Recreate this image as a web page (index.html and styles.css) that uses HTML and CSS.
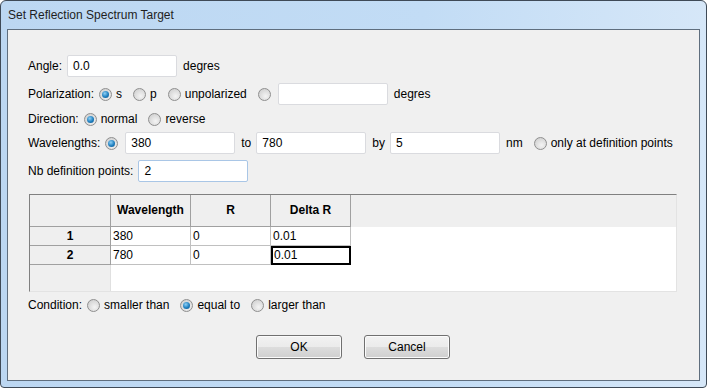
FILE: index.html
```html
<!DOCTYPE html>
<html lang="en">

<head>
    <meta charset="UTF-8">
    <title>Set Reflection Spectrum Target</title>
    <link rel="stylesheet" href="styles.css">
</head>

<body>
    <div class="window">
        <div class="titlebar">Set Reflection Spectrum Target</div>

        <div class="client">
            <!-- Angle -->
            <div class="row row-angle">
                <span class="label">Angle:</span>
                <span class="field">0.0</span>
                <span class="unit">degres</span>
            </div>

            <!-- Polarization -->
            <div class="row row-pol">
                <span class="label">Polarization:</span>
                <span class="option"><span class="radio checked"></span>s</span>
                <span class="option"><span class="radio"></span>p</span>
                <span class="option"><span class="radio"></span>unpolarized</span>
                <span class="option bare"><span class="radio"></span></span>
                <span class="field"></span>
                <span class="unit">degres</span>
            </div>

            <!-- Direction -->
            <div class="row row-dir">
                <span class="label">Direction:</span>
                <span class="option"><span class="radio checked"></span>normal</span>
                <span class="option"><span class="radio"></span>reverse</span>
            </div>

            <!-- Wavelengths -->
            <div class="row row-wl">
                <span class="label">Wavelengths:</span>
                <span class="option bare"><span class="radio checked"></span></span>
                <span class="field">380</span>
                <span class="unit">to</span>
                <span class="field">780</span>
                <span class="unit">by</span>
                <span class="field">5</span>
                <span class="unit wide">nm</span>
                <span class="option"><span class="radio"></span>only at definition points</span>
            </div>

            <!-- Nb definition points -->
            <div class="row row-nb">
                <span class="label">Nb definition points:</span>
                <span class="field focus">2</span>
            </div>

            <!-- Table -->
            <div class="table">
                <div class="thead">
                    <div class="corner"></div>
                    <div class="th">Wavelength</div>
                    <div class="th">R</div>
                    <div class="th">Delta R</div>
                </div>
                <div class="tr">
                    <div class="rh">1</div>
                    <div class="td">380</div>
                    <div class="td">0</div>
                    <div class="td">0.01</div>
                </div>
                <div class="tr">
                    <div class="rh">2</div>
                    <div class="td">780</div>
                    <div class="td">0</div>
                    <div class="td selected">0.01</div>
                </div>
                <div class="tfill">
                    <div class="rh-fill"></div>
                </div>
            </div>

            <!-- Condition -->
            <div class="row row-cond">
                <span class="label">Condition:</span>
                <span class="option"><span class="radio"></span>smaller than</span>
                <span class="option"><span class="radio checked"></span>equal to</span>
                <span class="option"><span class="radio"></span>larger than</span>
            </div>

            <div class="buttons">
                <button>OK</button>
                <button>Cancel</button>
            </div>
        </div>
    </div>
</body>

</html>
```

FILE: styles.css
```css
/* General Styles */
body {
    margin: 0;
    padding: 0;
    background: #ffffff;
    font-family: 'Liberation Sans', Arial, sans-serif;
    font-size: 12px;
    color: #000;
}

.window {
    width: 707px;
    height: 388px;
    box-sizing: border-box;
    border: 1px solid #3f4a57;
    border-radius: 6px 6px 4px 4px;
    background: linear-gradient(90deg, #bcd7f2, #c2dcf5 60%, #d6e7f8);
    display: flex;
    flex-direction: column;
}

.titlebar {
    height: 28px;
    line-height: 29px;
    padding-left: 7px;
    color: #1e1e1e;
}

.client {
    margin-left: 6px;
    width: 693px;
    height: 352px;
    box-sizing: border-box;
    border: 1px solid #5f6e7e;
    background: #f0f0f0;
    padding: 25px 0 0 20px;
    display: flex;
    flex-direction: column;
}

/* Rows */
.row {
    display: flex;
    align-items: center;
    height: 22px;
}

.row-pol { margin-top: 6px; }
.row-dir { margin-top: 5px; height: 18px; }
.row-wl { margin-top: 4px; }
.row-nb { margin-top: 6px; }
.row-cond { margin-top: 4px; height: 18px; }

.label {
    margin-right: 5px;
}

.unit {
    margin: 0 5px 0 6px;
}

.unit.wide {
    margin-right: 11px;
}

.field {
    width: 110px;
    height: 22px;
    box-sizing: border-box;
    background: #fff;
    border: 1px solid #dadbdf;
    border-radius: 2px;
    padding-left: 5px;
    line-height: 20px;
}

.field.focus {
    border-color: #a9c6e6;
}

.option {
    display: flex;
    align-items: center;
    margin-right: 11px;
}

.option.bare {
    margin-right: 3px;
}

/* Radio buttons */
.radio {
    width: 11px;
    height: 11px;
    border: 1px solid #8f8f8f;
    border-radius: 50%;
    background: radial-gradient(circle at 60% 65%, #f4f4f4, #d6d6d6 70%, #c4c4c4);
    margin-right: 4px;
    position: relative;
}

.radio.checked::after {
    content: '';
    position: absolute;
    left: 2px;
    top: 2px;
    width: 7px;
    height: 7px;
    border-radius: 50%;
    background: radial-gradient(circle at 40% 35%, #8fd0f5, #1f7fbf 55%, #0d4f84);
}

/* Table */
.table {
    margin-top: 12px;
    margin-left: 1px;
    width: 648px;
    height: 98px;
    box-sizing: border-box;
    border-top: 1px solid #808080;
    border-left: 1px solid #808080;
    border-right: 1px solid #e3e3e3;
    border-bottom: 1px solid #e3e3e3;
    background: #fff;
    display: flex;
    flex-direction: column;
}

.thead {
    display: flex;
    height: 32px;
    background: #efefef;
}

.corner,
.rh,
.rh-fill {
    width: 81px;
    box-sizing: border-box;
    border-right: 1px solid #a0a0a0;
    border-bottom: 1px solid #a0a0a0;
    background: #efefef;
}

.th {
    width: 80px;
    box-sizing: border-box;
    border-right: 1px solid #a0a0a0;
    border-bottom: 1px solid #a0a0a0;
    font-weight: bold;
    text-align: center;
    line-height: 31px;
}

.tr {
    display: flex;
    height: 19px;
}

.rh {
    font-weight: bold;
    text-align: center;
    line-height: 18px;
}

.td {
    width: 80px;
    box-sizing: border-box;
    border-right: 1px solid #c0c0c0;
    border-bottom: 1px solid #c0c0c0;
    padding-left: 2px;
    line-height: 18px;
}

.td.selected {
    border: 2px solid #000;
    line-height: 15px;
    padding-left: 1px;
}

.tfill {
    flex: 1;
    display: flex;
}

.rh-fill {
    border: none;
    border-right: 1px solid #e0e0e0;
    width: 81px;
}

/* Buttons */
.buttons {
    display: flex;
    justify-content: center;
    gap: 22px;
    margin-top: 21px;
    margin-left: -21px;
}

button {
    width: 86px;
    height: 24px;
    font-family: inherit;
    font-size: 12px;
    color: #000;
    border: 1px solid #707070;
    border-radius: 3px;
    background: linear-gradient(#f2f2f2, #ebebeb 50%, #dddddd 50%, #cfcfcf);
    box-shadow: inset 0 0 0 1px #fbfbfb;
    padding: 0;
}
```
